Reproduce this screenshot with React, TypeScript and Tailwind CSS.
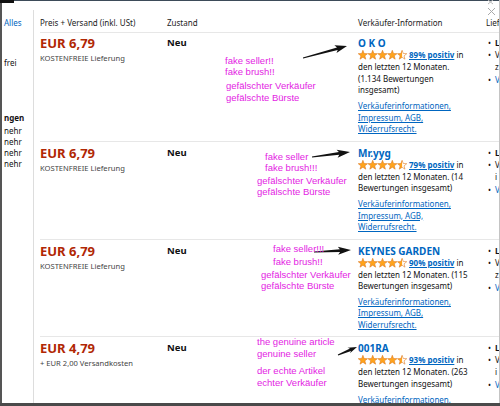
import React from "react";

const STAR =
  "5,0.2 6.23,3.5 9.76,3.66 7,5.85 7.94,9.25 5,7.3 2.06,9.25 3,5.85 0.24,3.66 3.77,3.5";
const HALF = "5,0.2 3.77,3.5 0.24,3.66 3,5.85 2.06,9.25 5,7.3";

function Stars() {
  return (
    <svg width="49" height="10" viewBox="0 0 50 10" className="shrink-0">
      {[0, 1, 2, 3, 4].map((i) => (
        <g key={i} transform={`translate(${i * 10} 0)`}>
          <polygon points={STAR} fill={i === 4 ? "#fff" : "#ffa41c"} />
          {i === 4 && <polygon points={HALF} fill="#ffa41c" />}
          <polygon
            points={STAR}
            fill="none"
            stroke="#de7921"
            strokeWidth="0.6"
            strokeLinejoin="round"
          />
        </g>
      ))}
    </svg>
  );
}

function arrow(x1: number, y1: number, x2: number, y2: number, head = 10, hw = 4) {
  const dx = x2 - x1;
  const dy = y2 - y1;
  const len = Math.hypot(dx, dy);
  const ux = dx / len;
  const uy = dy / len;
  const nx = -uy;
  const ny = ux;
  const bx = x2 - ux * head;
  const by = y2 - uy * head;
  const p = (x: number, y: number) => `${x.toFixed(1)},${y.toFixed(1)}`;
  return [
    p(x1 + nx * 0.4, y1 + ny * 0.4),
    p(bx + nx * 1.3, by + ny * 1.3),
    p(bx - ux * 2 + nx * hw, by - uy * 2 + ny * hw),
    p(x2, y2),
    p(bx - ux * 2 - nx * hw, by - uy * 2 - ny * hw),
    p(bx - nx * 1.3, by - ny * 1.3),
    p(x1 - nx * 0.4, y1 - ny * 0.4),
  ].join(" ");
}

type Row = {
  price: string;
  ship: string;
  name: string;
  pct: string;
  lines: string[];
  third: string;
  pt: string;
};

const rows: Row[] = [
  {
    price: "EUR 6,79",
    ship: "KOSTENFREIE Lieferung",
    name: "O K O",
    pct: "89% positiv",
    lines: ["den letzten 12 Monaten.", "(1.134 Bewertungen", "insgesamt)"],
    third: "z",
    pt: "pt-[4px]",
  },
  {
    price: "EUR 6,79",
    ship: "KOSTENFREIE Lieferung",
    name: "Mr.yyg",
    pct: "79% positiv",
    lines: ["den letzten 12 Monaten. (14", "Bewertungen insgesamt)"],
    third: "i",
    pt: "pt-[5px]",
  },
  {
    price: "EUR 6,79",
    ship: "KOSTENFREIE Lieferung",
    name: "KEYNES GARDEN",
    pct: "90% positiv",
    lines: ["den letzten 12 Monaten. (115", "Bewertungen insgesamt)"],
    third: "z",
    pt: "pt-[5px]",
  },
  {
    price: "EUR 4,79",
    ship: "+ EUR 2,00 Versandkosten",
    name: "001RA",
    pct: "93% positiv",
    lines: ["den letzten 12 Monaten. (263", "Bewertungen insgesamt)"],
    third: "i",
    pt: "pt-[5px]",
  },
];

function OfferRow({ r }: { r: Row }) {
  return (
    <div className={`flex border-b border-[#e7e7e7] pb-[6px] ${r.pt}`}>
      <div className="w-[127px] shrink-0">
        <div className="text-[13px] font-bold leading-[12px] text-[#b12704]">{r.price}</div>
        <div className="mt-[4px] text-[7.6px] leading-[11px] text-[#444]">{r.ship}</div>
      </div>
      <div className="w-[191px] shrink-0 text-[9.5px] font-bold leading-[12px] text-[#111]">Neu</div>
      <div className="w-[123px] shrink-0 text-[8px] text-[#111]">
        <div className="text-[10px] font-bold leading-[12px] text-[#0066c0]">{r.name}</div>
        <div className="flex h-[12px] items-center whitespace-nowrap">
          <Stars />
          <span className="ml-[2px] font-bold text-[#0066c0] underline">{r.pct}</span>
          <span>&nbsp;in</span>
        </div>
        {r.lines.map((l) => (
          <div key={l} className="whitespace-nowrap leading-[11.7px]">
            {l}
          </div>
        ))}
        <div className="mt-[4px] leading-[11.5px] text-[#0066c0] underline">
          <div>Verkäuferinformationen,</div>
          <div>Impressum, AGB,</div>
          <div>Widerrufsrecht.</div>
        </div>
      </div>
      {/* delivery column, only its first letters are visible */}
      <div className="flex-1 whitespace-nowrap pl-[7px] text-[8px] leading-[12px] text-[#111]">
        <div className="flex">
          <span className="w-[7px]">•</span>
          <span className="font-bold">L</span>
        </div>
        <div className="flex">
          <span className="w-[7px]">•</span>
          <span>V</span>
        </div>
        <div className="flex">
          <span className="w-[7px]"></span>
          <span>{r.third}</span>
        </div>
        <div className="mt-[1px] flex">
          <span className="w-[7px]">•</span>
          <span className="text-[#0066c0]">V</span>
        </div>
      </div>
    </div>
  );
}

export default function App() {
  const ann = "absolute whitespace-nowrap font-['Liberation_Sans',sans-serif] text-[9.5px] text-[#e31ce3]";
  return (
    <div className="relative h-[406px] w-[500px] overflow-hidden bg-white font-['Noto_Sans',sans-serif]">
      <div className="flex h-full border-l-2 border-[#555] pt-[2px]">
        {/* sidebar */}
        <div className="w-[31px] shrink-0 overflow-hidden pl-[2px] pt-[15px] text-[8px] text-[#111]">
          <div className="leading-[12px] text-[#0066c0]">Alles</div>
          <div className="mt-[28px] leading-[12px]">frei</div>
          <div className="mt-[43px] font-bold leading-[12px]">ngen</div>
          <div className="mt-[0.5px] leading-[11.3px]">
            <div>nehr</div>
            <div>nehr</div>
            <div>nehr</div>
            <div>nehr</div>
          </div>
        </div>
        <div className="mt-[8px] w-px shrink-0 bg-[#dddddd]" />

        {/* table */}
        <div className="flex-1 pl-[6px]">
          <div className="flex h-[31px] border-b border-[#e7e7e7] pt-[15px] text-[8px] leading-[12px] text-[#222]">
            <div className="w-[127px] shrink-0">Preis + Versand (inkl. USt)</div>
            <div className="w-[191px] shrink-0">Zustand</div>
            <div className="w-[123px] shrink-0">Verkäufer-Information</div>
            <div className="flex-1 whitespace-nowrap pl-[5px]">Lief</div>
          </div>
          {rows.map((r) => (
            <OfferRow key={r.name} r={r} />
          ))}
        </div>
      </div>

      {/* window frame */}
      <div className="absolute left-0 right-0 top-0 h-px bg-[#3d4b59]" />
      <div className="absolute left-0 top-0 h-[3px] w-[14px] bg-[#111]" />
      <div className="absolute bottom-0 right-0 top-0 w-px bg-[#c4c4c4]" />
      <div className="absolute bottom-0 left-0 right-0 h-[3px] bg-[#4a4a4a]" />
      <svg className="absolute left-[486px] top-0" width="11" height="16" viewBox="0 0 11 16">
        <path d="M2 0 L7 4 M7 0 L2 4" stroke="#bbb" strokeWidth="1" />
        <path d="M2 8 L9 15 M9 8 L2 15" stroke="#aaa" strokeWidth="1" />
      </svg>

      {/* annotations */}
      <svg className="pointer-events-none absolute left-0 top-0" width="500" height="406">
        <polygon points={arrow(303, 58, 347, 46, 10, 4)} fill="#111" />
        <polygon points={arrow(312, 157, 350, 152, 11, 4)} fill="#111" />
        <polygon points={arrow(314, 252, 351, 250, 11, 4)} fill="#111" />
        <polygon points={arrow(338, 355, 357, 347, 7, 3)} fill="#111" />
      </svg>

      <div className={`${ann} left-[225px] top-[55px] leading-[11px]`}>
        <div>fake seller!!</div>
        <div>fake brush!!</div>
      </div>
      <div className={`${ann} left-[226px] top-[80px] leading-[12px]`}>
        <div>gefälschter Verkäufer</div>
        <div>gefälschte Bürste</div>
      </div>

      <div className={`${ann} left-[265px] top-[151px] leading-[11px]`}>
        <div>fake seller</div>
        <div>fake brush!!!</div>
      </div>
      <div className={`${ann} left-[257px] top-[175px] leading-[11px]`}>
        <div>gefälschter Verkäufer</div>
        <div>gefälschte Bürste</div>
      </div>

      <div className={`${ann} left-[273px] top-[243px] leading-[12.5px]`}>
        <div>fake seller!!!</div>
        <div>fake brush!!</div>
      </div>
      <div className={`${ann} left-[261px] top-[269px] leading-[11px]`}>
        <div>gefälschter Verkäufer</div>
        <div>gefälschte Bürste</div>
      </div>

      <div className={`${ann} left-[257px] top-[336px] leading-[12px]`}>
        <div>the genuine article</div>
        <div>genuine seller</div>
      </div>
      <div className={`${ann} left-[257px] top-[365px] leading-[12px]`}>
        <div>der echte Artikel</div>
        <div>echter Verkäufer</div>
      </div>
    </div>
  );
}
